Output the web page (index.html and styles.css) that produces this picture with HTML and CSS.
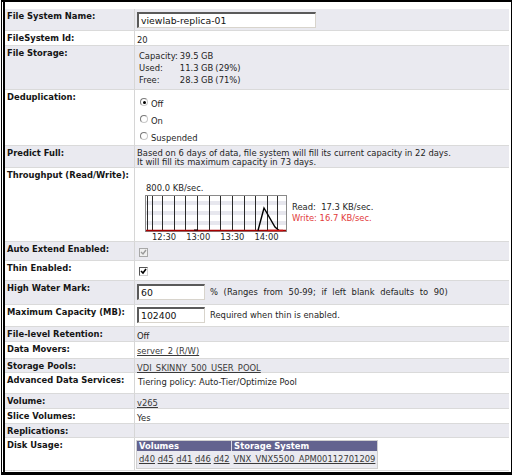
FILE: index.html
```html
<!DOCTYPE html>
<html>
<head>
<meta charset="utf-8">
<title>File System Properties</title>
<link rel="stylesheet" href="styles.css">
</head>
<body>
<div class="frame">
  <div class="inner">
    <div class="sheet">
      <div class="l">File System Name:</div>
      <div class="v v-name"><span class="field wide">viewlab-replica-01</span></div>

      <div class="l">FileSystem Id:</div>
      <div class="v">20</div>

      <div class="l">File Storage:</div>
      <div class="v">
        <div class="stor">
          <span>Capacity:</span><span class="num">39.5 GB</span><span></span>
          <span>Used:</span><span class="num">11.3 GB</span><span>(29%)</span>
          <span>Free:</span><span class="num">28.3 GB</span><span>(71%)</span>
        </div>
      </div>

      <div class="l">Deduplication:</div>
      <div class="v v-dedup">
        <div class="opt"><span class="radio on"></span>Off</div>
        <div class="opt"><span class="radio"></span>On</div>
        <div class="opt"><span class="radio"></span>Suspended</div>
      </div>

      <div class="l">Predict Full:</div>
      <div class="v v-pred">Based on 6 days of data, file system will fill its current capacity in 22 days.<br>It will fill its maximum capacity in 73 days.</div>

      <div class="l">Throughput (Read/Write):</div>
      <div class="v">
        <div class="tp">
          <div class="chartcol">
            <div class="ctitle">800.0 KB/sec.</div>
            <svg class="chart" width="142" height="37" viewBox="0 0 142 37">
              <rect x="0.5" y="0.5" width="141" height="36" fill="#fff" stroke="#8a8a8a"/>
              <rect x="1" y="6" width="140" height="4" fill="#e7e7ee"/>
              <rect x="1" y="16" width="140" height="4" fill="#e7e7ee"/>
              <rect x="1" y="26" width="140" height="4" fill="#e7e7ee"/>
              <g stroke="#2a2a2a" stroke-width="1">
                <line x1="2.5" y1="1" x2="2.5" y2="36"/>
                <line x1="7.5" y1="1" x2="7.5" y2="36"/>
                <line x1="17.5" y1="1" x2="17.5" y2="36"/>
                <line x1="29.5" y1="1" x2="29.5" y2="36"/>
                <line x1="40.5" y1="1" x2="40.5" y2="36"/>
                <line x1="52.5" y1="1" x2="52.5" y2="36"/>
                <line x1="64.5" y1="1" x2="64.5" y2="36"/>
                <line x1="75.5" y1="1" x2="75.5" y2="36"/>
                <line x1="87.5" y1="1" x2="87.5" y2="36"/>
                <line x1="99.5" y1="1" x2="99.5" y2="36"/>
                <line x1="110.5" y1="1" x2="110.5" y2="36"/>
                <line x1="122.5" y1="1" x2="122.5" y2="36"/>
                <line x1="132.5" y1="1" x2="132.5" y2="36"/>
              </g>
              <line x1="1" y1="35.5" x2="141" y2="35.5" stroke="#a80000" stroke-width="1.5"/>
              <line x1="49" y1="35" x2="53" y2="35" stroke="#000" stroke-width="1"/>
              <polyline points="113,35.5 119,13 130,32 134,35.5" fill="none" stroke="#000" stroke-width="1.4"/>
              <line x1="123" y1="35.5" x2="138" y2="35.5" stroke="#d01010" stroke-width="1.5"/>
            </svg>
            <div class="axis"><span>12:30</span><span>13:00</span><span>13:30</span><span>14:00</span></div>
          </div>
          <div class="rw">
            <div>Read:&nbsp;&nbsp;17.3 KB/sec.</div>
            <div class="write">Write: 16.7 KB/sec.</div>
          </div>
        </div>
      </div>

      <div class="l">Auto Extend Enabled:</div>
      <div class="v"><span class="cb dis"><svg width="7" height="7" viewBox="0 0 7 7"><polyline points="1,3 3,5 6,1" fill="none" stroke="#9a9a9a" stroke-width="1.4"/></svg></span></div>

      <div class="l">Thin Enabled:</div>
      <div class="v"><span class="cb chk"><svg width="7" height="7" viewBox="0 0 7 7"><polyline points="1,3 3,5 6,1" fill="none" stroke="#000" stroke-width="1.6"/></svg></span></div>

      <div class="l">High Water Mark:</div>
      <div class="v v-hwm"><span class="field small">60</span><span class="note wide-note">% (Ranges from 50-99; if left blank defaults to 90)</span></div>

      <div class="l">Maximum Capacity (MB):</div>
      <div class="v v-max"><span class="field small">102400</span><span class="note">Required when thin is enabled.</span></div>

      <div class="l">File-level Retention:</div>
      <div class="v">Off</div>

      <div class="l">Data Movers:</div>
      <div class="v"><span class="lnk">server_2 (R/W)</span></div>

      <div class="l">Storage Pools:</div>
      <div class="v"><span class="lnk">VDI_SKINNY_500_USER_POOL</span></div>

      <div class="l">Advanced Data Services:</div>
      <div class="v v-ads">Tiering policy: Auto-Tier/Optimize Pool</div>

      <div class="l">Volume:</div>
      <div class="v"><span class="lnk">v265</span></div>

      <div class="l">Slice Volumes:</div>
      <div class="v">Yes</div>

      <div class="l">Replications:</div>
      <div class="v"></div>

      <div class="l">Disk Usage:</div>
      <div class="v v-du">
        <table class="disk">
          <tr><th class="c1">Volumes</th><th>Storage System</th></tr>
          <tr><td class="c1"><span class="lnk">d40</span> <span class="lnk">d45</span> <span class="lnk">d41</span> <span class="lnk">d46</span> <span class="lnk">d42</span></td><td><span class="lnk">VNX_VNX5500_APM00112701209</span></td></tr>
        </table>
      </div>
    </div>
  </div>
</div>
</body>
</html>
```

FILE: styles.css
```css
* { box-sizing: border-box; }

body {
  margin: 0;
  background: #fff;
  font-family: "DejaVu Sans", Verdana, sans-serif;
  font-size: 8.4px;
  color: #1e1e1e;
}

.frame {
  margin-left: 1px;
  width: 511px;
  height: 475px;
  border-top: 2px solid #000;
  border-left: 1px solid #000;
  border-right: 1px solid #000;
  border-bottom: 3px solid #000;
}

.inner {
  margin-left: 1px;
  height: 100%;
  border-left: 2px solid #000;
  padding: 7px 2px 0 0;
}

.sheet {
  display: grid;
  grid-template-columns: 130px 374px;
  grid-template-rows: 22px 15px 44px 56px 22px 74px 19px 20px 24px 22px 15px 17px 14px 21px 15px 15px 14px 33px;
}

.sheet > div {
  border-bottom: 1px solid #dadada;
}

.sheet > div:nth-child(4n+1),
.sheet > div:nth-child(4n+2) {
  background: #eaeaf0;
}

.l {
  font-weight: bold;
  color: #151515;
  padding: 2px 2px 0;
  line-height: 10px;
  border-right: 1px solid #d6d6d6;
  white-space: nowrap;
}

.v {
  padding: 4px 2px 0;
  line-height: 10px;
  white-space: nowrap;
}

.field {
  display: block;
  height: 16px;
  background: #fff;
  border-top: 2px solid #5a5a5a;
  border-left: 2px solid #5a5a5a;
  border-right: 1px solid #d8d4cc;
  border-bottom: 1px solid #d8d4cc;
  font-size: 9.3px;
  line-height: 13px;
  padding-left: 2px;
  color: #111;
}
.field.wide { width: 179px; }
.field.small { width: 68px; flex: none; }

.v-name { padding-top: 3px; }

.stor {
  display: grid;
  grid-template-columns: auto auto auto;
  justify-content: start;
  column-gap: 2px;
  line-height: 12px;
  padding-left: 2px;
}
.stor .num { text-align: right; }

.v-dedup { padding-top: 5px; }
.opt {
  display: flex;
  align-items: center;
  height: 17px;
}
.radio {
  position: relative;
  width: 8px;
  height: 8px;
  margin: 0 3px 3px 3px;
  border-radius: 50%;
  border: 1px solid #7a7a7a;
  border-right-color: #c8c8c8;
  border-bottom-color: #c8c8c8;
  background: #fff;
}
.radio.on::after {
  content: "";
  position: absolute;
  left: 1.5px;
  top: 1.5px;
  width: 3px;
  height: 3px;
  border-radius: 50%;
  background: #000;
}

.v-pred {
  padding-top: 3px;
  line-height: 9px;
}

.tp {
  display: flex;
  gap: 5px;
  padding: 11px 0 0 8px;
}
.ctitle {
  padding-left: 1px;
  height: 10px;
  margin-bottom: 2px;
}
.chart { display: block; }
.axis {
  display: flex;
  gap: 10px;
  padding-left: 7px;
  line-height: 10px;
}
.rw {
  padding-top: 19px;
  line-height: 11px;
}
.write { color: #e23a3a; }

.cb {
  display: flex;
  align-items: center;
  justify-content: center;
  width: 9px;
  height: 9px;
  margin: 1.5px 0 0 2px;
}
.cb.dis {
  background: #efefef;
  border: 1px solid #a8a8a8;
}
.cb.chk {
  background: #fff;
  border: 1px solid #d0d0d0;
  border-top-color: #555;
  border-left-color: #555;
}

.v-hwm, .v-max {
  display: flex;
  align-items: center;
  height: 100%;
  padding-top: 0;
  padding-bottom: 1px;
}
.note { margin-left: 5px; }
.wide-note { word-spacing: 3px; }

.lnk {
  color: #3a3a3a;
  text-decoration: underline;
}

.v-ads { padding-left: 3px; }

.v-du {
  padding: 2px 0 0 1px;
}
.disk {
  border-collapse: collapse;
  width: 235px;
  border: 1px solid #d0d0d0;
}
.disk th {
  background: #63638f;
  color: #fff;
  text-align: left;
  font-weight: bold;
  height: 10px;
  line-height: 10px;
  padding: 0 2px;
}
.disk th.c1 { border-right: 1px solid #d8d8e4; }
.disk td {
  background: #eaeaf0;
  height: 17px;
  padding: 0 2px;
  line-height: 10px;
}
.disk .c1 { width: 94px; }
```
